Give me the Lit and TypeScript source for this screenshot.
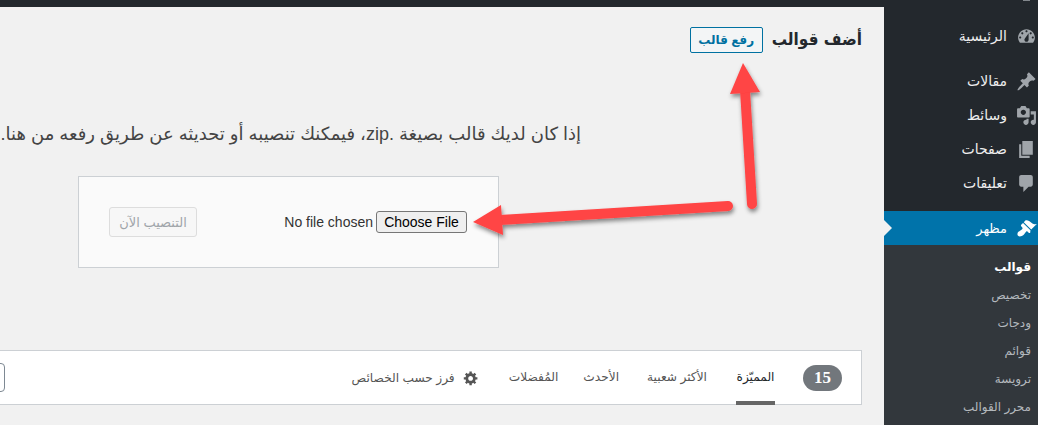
import { LitElement, html, css, svg } from "lit";
import { customElement } from "lit/decorators.js";

const icons: Record<string, string> = {
  dash: "M3.76 16h12.48c1.1-1.37 1.76-3.11 1.76-5 0-4.42-3.58-8-8-8s-8 3.58-8 8c0 1.89.66 3.63 1.76 5zM10 4c.55 0 1 .45 1 1s-.45 1-1 1-1-.45-1-1 .45-1 1-1zM6 6c.55 0 1 .45 1 1s-.45 1-1 1-1-.45-1-1 .45-1 1-1zm8 0c.55 0 1 .45 1 1s-.45 1-1 1-1-.45-1-1 .45-1 1-1zm-5.37 5.55L12 7v6c0 1.1-.9 2-2 2s-2-.9-2-2c0-.57.24-1.08.63-1.45zM4 10c.55 0 1 .45 1 1s-.45 1-1 1-1-.45-1-1 .45-1 1-1zm12 0c.55 0 1 .45 1 1s-.45 1-1 1-1-.45-1-1 .45-1 1-1z",
  pin: "M10.44 3.02l1.82-1.82 6.36 6.35-1.83 1.82c-1.05-.68-2.48-.57-3.41.36l-.75.75c-.92.93-1.04 2.35-.35 3.41l-1.83 1.82-2.41-2.41-2.8 2.79c-.42.42-3.38 2.71-3.8 2.29s1.86-3.39 2.28-3.81l2.79-2.79L4.1 9.36l1.83-1.82c1.05.69 2.48.57 3.4-.36l.75-.75c.93-.92 1.05-2.35.36-3.41z",
  media: "M13 11V4c0-.55-.45-1-1-1h-1.67L9 1H5L3.67 3H2c-.55 0-1 .45-1 1v7c0 .55.45 1 1 1h10c.55 0 1-.45 1-1zM7 4.5c1.38 0 2.5 1.12 2.5 2.5S8.38 9.5 7 9.5 4.5 8.38 4.5 7 5.62 4.5 7 4.5zM14 6h5v10.5c0 1.38-1.12 2.5-2.5 2.5S14 17.88 14 16.5s1.12-2.5 2.5-2.5c.17 0 .34.02.5.05V9h-3V6zm-4 8.05V13h2v3.5c0 1.38-1.12 2.5-2.5 2.5S7 17.88 7 16.5 8.12 14 9.5 14c.17 0 .34.02.5.05z",
  page: "M6 15V2h10v13H6zm-1 1h8v2H3V5h2v11z",
  comment: "M5 2h9c1.1 0 2 .9 2 2v7c0 1.1-.9 2-2 2h-2l-5 5v-5H5c-1.1 0-2-.9-2-2V4c0-1.1.9-2 2-2z",
  brush: "M14.48 11.06L7.41 3.99l1.5-1.5c.5-.56 2.3-.47 3.51.32 1.21.8 1.43 1.28 2.91 2.1 1.18.64 2.45 1.26 4.45.85zm-.71.71L6.7 4.7 4.93 6.47c-.39.39-.39 1.02 0 1.41l1.06 1.06c.39.39.39 1.03 0 1.42-.6.6-1.43 1.11-2.21 1.69-.35.26-.7.53-1.01.84C1.43 13.23.91 15.95 1.98 17.02c1.07 1.07 3.79.55 5.13-.79.31-.31.58-.66.84-1.01.58-.78 1.09-1.61 1.69-2.21.39-.39 1.03-.39 1.42 0l1.06 1.06c.39.39 1.02.39 1.41 0z",
  gear: "M18 12h-2.18c-.17.7-.44 1.35-.81 1.93l1.54 1.54-2.1 2.1-1.54-1.54c-.58.36-1.23.63-1.91.79V19H8v-2.18c-.68-.16-1.33-.43-1.91-.79l-1.54 1.54-2.12-2.12 1.54-1.54c-.36-.58-.63-1.23-.79-1.91H1V9.03h2.17c.16-.7.44-1.35.8-1.94L2.43 5.55l2.1-2.1 1.54 1.54c.58-.37 1.24-.64 1.93-.81V2h3v2.18c.68.16 1.33.43 1.91.79l1.54-1.54 2.12 2.12-1.54 1.54c.36.59.64 1.24.8 1.94H18V12zm-8.5 1.5c1.66 0 3-1.34 3-3s-1.34-3-3-3-3 1.34-3 3 1.34 3 3 3z",
};

const icon = (name: string, cls = "ico") =>
  html`<svg class=${cls} viewBox="0 0 20 20">${svg`<path fill="currentColor" d=${icons[name]}></path>`}</svg>`;

@customElement("app-root")
export class AppRoot extends LitElement {
  static styles = css`
    :host { display: block; width: 1049px; height: 425px; overflow: hidden; background: #fff; position: relative; }
    * { box-sizing: border-box; }
    .page {
      direction: rtl; width: 1038px; height: 425px; display: flex; flex-direction: column;
      font-family: "Liberation Sans", "DejaVu Sans", sans-serif; overflow: hidden; background: #f1f1f1;
    }
    .topbar { height: 7px; flex: none; background: #23282d; display: flex; padding-right: 8px; }
    .peek { width: 7px; height: 1px; background: #82878c; }
    .body { flex: 1; display: flex; min-height: 0; }
    .side { width: 154px; flex: none; background: #23282d; padding-top: 12px; color: #eee; font-size: 14px; display: flex; flex-direction: column; }
    .item { height: 34px; flex: none; display: flex; align-items: center; gap: 9px; padding-right: 1px; }
    .item.first { margin-bottom: 11px; }
    .ico { width: 21px; height: 21px; color: #a0a5aa; flex: none; }
    .item.active { background: #0073aa; color: #fff; margin-top: 11px; position: relative; font-size: 13px; }
    .item.active .ico { color: #fff; }
    .item.active::after {
      content: ""; position: absolute; left: 0; top: 9px; border: 8px solid transparent;
      border-left-color: #f1f1f1; border-right-width: 0;
    }
    .sub { background: #32373c; padding-top: 8px; flex: 1; color: #b4b9be; font-size: 12px; }
    .sub div { height: 28px; line-height: 28px; padding-right: 7px; }
    .sub .cur { color: #fff; font-weight: 700; }
    .main { flex: 1; min-width: 0; padding-right: 22px; }
    .head { display: flex; align-items: center; gap: 9px; height: 26px; margin-top: 20px; }
    h1 { margin: 0 0 2px; font-family: "DejaVu Sans Condensed", "DejaVu Sans", sans-serif; font-size: 17px; font-weight: 700; color: #23282d; }
    .upload {
      width: 73px; height: 26px; border: 1px solid #0071a1; border-radius: 2px; background: #f3f5f6;
      color: #0071a1; font: 700 12px "Liberation Sans", "DejaVu Sans", sans-serif; padding: 0;
    }
    p { margin: 68px 281px 0 -400px; font-size: 18px; line-height: 26px; color: #444; white-space: nowrap; height: 26px; }
    .box {
      margin: 29px 363px 0 0; width: 421px; height: 92px; background: #fafafa; border: 1px solid #ccd0d4;
      display: flex; align-items: center; justify-content: space-between; padding: 0 31px 0 30px;
    }
    .file { direction: ltr; display: flex; align-items: center; gap: 3px; font: 14px "Liberation Sans", Arial, sans-serif; color: #333; }
    .file button {
      width: 91px; height: 22px; padding: 0; font: 14px "Liberation Sans", Arial, sans-serif; color: #000;
      background: #efefef; border: 1px solid #767676; border-radius: 3px;
    }
    .install {
      width: 88px; height: 30px; padding: 0; border: 1px solid #ddd; border-radius: 3px; background: #f7f7f7;
      color: #a0a5aa; font: 13px "Liberation Sans", "DejaVu Sans", sans-serif;
    }
    .tabs {
      margin: 82px 0 0 -20px; height: 55px; background: #fff; border: 1px solid #ccd0d4; border-left: 0;
      display: flex; align-items: center; padding-right: 19px; font-size: 12.2px; color: #555;
    }
    .count {
      width: 39px; height: 26px; border-radius: 13px; background: #72777c; color: #fff; flex: none;
      font: 700 17px/26px "Liberation Serif", serif; text-align: center; margin-left: 28px;
    }
    .tab { height: 54px; line-height: 53px; margin-left: 28px; white-space: nowrap; flex: none; }
    .tab.on { color: #23282d; border-bottom: 4px solid #666; width: 39px; text-align: center; margin-left: 29px; }
    .tab.fav { margin-left: 25px; }
    .tab.new { margin-left: 25px; }
    .sort { display: flex; align-items: center; gap: 8px; margin-right: 5px; white-space: nowrap; flex: none; }
    .sort .ico { width: 16px; height: 16px; color: #555; }
    .search {
      margin-right: auto; width: 25px; height: 29px; border: 1px solid #7e8993; border-radius: 4px; background: #fff; flex: none;
    }
    .arrows { position: absolute; left: 0; top: 0; width: 1049px; height: 425px; pointer-events: none; }
  `;

  render() {
    const main = [
      ["pin", "مقالات"],
      ["media", "وسائط"],
      ["page", "صفحات"],
      ["comment", "تعليقات"],
    ];
    const subs = ["تخصيص", "ودجات", "قوائم", "ترويسة", "محرر القوالب"];
    return html`
      <div class="page">
        <div class="topbar"><span class="peek"></span></div>
        <div class="body">
          <nav class="side">
            <div class="item first">${icon("dash")}<span>الرئيسية</span></div>
            ${main.map(([i, t]) => html`<div class="item">${icon(i)}<span>${t}</span></div>`)}
            <div class="item active">${icon("brush")}<span>مظهر</span></div>
            <div class="sub">
              <div class="cur">قوالب</div>
              ${subs.map((s) => html`<div>${s}</div>`)}
            </div>
          </nav>
          <main class="main">
            <div class="head">
              <h1>أضف قوالب</h1>
              <button class="upload">رفع قالب</button>
            </div>
            <p>إذا كان لديك قالب بصيغة .zip، فيمكنك تنصيبه أو تحديثه عن طريق رفعه من هنا.</p>
            <div class="box">
              <div class="file"><span>No file chosen</span><button>Choose File</button></div>
              <button class="install">التنصيب الآن</button>
            </div>
            <div class="tabs">
              <span class="count">15</span>
              <span class="tab on">المميّزة</span>
              <span class="tab">الأكثر شعبية</span>
              <span class="tab new">الأحدث</span>
              <span class="tab fav">المُفضلات</span>
              <span class="sort">${icon("gear")}<span>فرز حسب الخصائص</span></span>
              <span class="search"></span>
            </div>
          </main>
        </div>
      </div>
      <svg class="arrows" viewBox="0 0 1049 425">
        <defs>
          <filter id="s" x="-20%" y="-20%" width="140%" height="140%">
            <feDropShadow dx="1" dy="3" stdDeviation="2" flood-color="#000" flood-opacity="0.45"></feDropShadow>
          </filter>
        </defs>
        <g filter="url(#s)" fill="#ff4444" stroke="none">
          <path d="M745 90 L752 204" stroke="#ff4444" stroke-width="10" stroke-linecap="round" fill="none"></path>
          <polygon points="743,63 760,92 730,94"></polygon>
          <path d="M500 220 L728 206" stroke="#ff4444" stroke-width="10" stroke-linecap="round" fill="none"></path>
          <polygon points="473,222 501,205 503,235"></polygon>
        </g>
      </svg>
    `;
  }
}
